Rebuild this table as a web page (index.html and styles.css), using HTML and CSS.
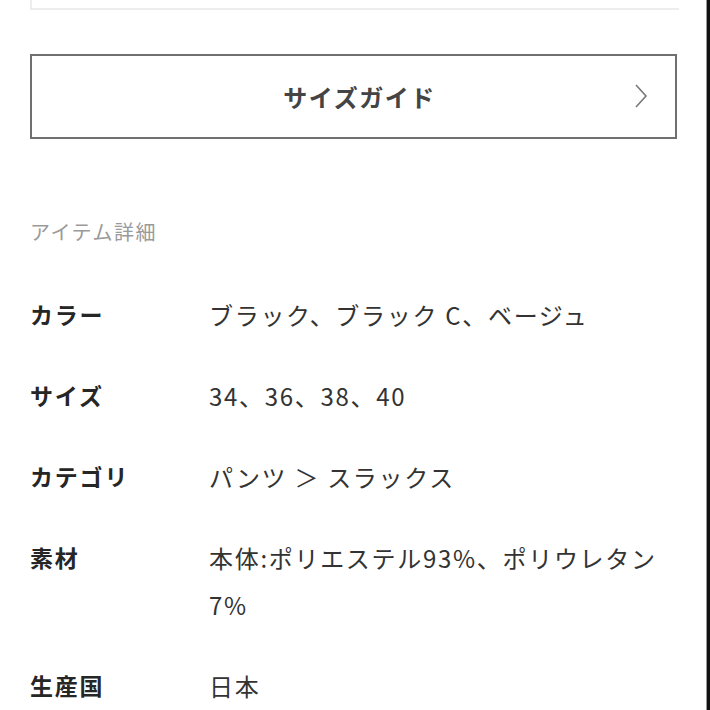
FILE: index.html
```html
<!DOCTYPE html>
<html lang="ja">
<head>
<meta charset="utf-8">
<link rel="stylesheet" href="styles.css">
</head>
<body>
<div class="page">
  <div class="top-box"></div>
  <a class="size-guide">
    <span class="size-guide-label">サイズガイド</span>
    <svg class="chevron" width="16" height="26" viewBox="0 0 16 26"><path d="M3 2 L13 13 L3 24" fill="none" stroke="#777" stroke-width="1.6"/></svg>
  </a>
  <h2 class="section-title">アイテム詳細</h2>
  <dl class="details">
    <dt>カラー</dt><dd>ブラック、ブラック C、ベージュ</dd>
    <dt>サイズ</dt><dd>34、36、38、40</dd>
    <dt>カテゴリ</dt><dd>パンツ ＞ スラックス</dd>
    <dt>素材</dt><dd>本体:ポリエステル93%、ポリウレタン7%</dd>
    <dt>生産国</dt><dd>日本</dd>
  </dl>
</div>
</body>
</html>
```
FILE: styles.css
```css
html, body {
  margin: 0;
  padding: 0;
  background: #fff;
}
.page {
  box-sizing: border-box;
  width: 710px;
  height: 710px;
  overflow: hidden;
  padding: 0 30px 0 30px;
  border-right: 3px solid #111;
  box-shadow: inset -1px 0 0 #999;
  font-family: "Noto Sans CJK JP", "Noto Sans", sans-serif;
  color: #333;
}
.top-box {
  height: 8px;
  margin-right: -2px;
  border-left: 2px solid #ededed;
  border-bottom: 2px solid #ededed;
}
.size-guide {
  box-sizing: border-box;
  margin-top: 44px;
  height: 85px;
  border: 2px solid #707070;
  display: flex;
  align-items: center;
  justify-content: center;
  position: relative;
}
.size-guide-label {
  font-size: 24px;
  font-weight: 700;
  color: #444;
  letter-spacing: 1.5px;
  margin-left: 12px;
}
.chevron {
  position: absolute;
  right: 26px;
  top: 27px;
}
.section-title {
  margin: 78px 0 0 0;
  font-size: 20px;
  line-height: 30px;
  font-weight: 400;
  color: #9a9a9a;
  letter-spacing: 1.5px;
}
.details {
  margin: 44px 0 0 0;
  display: grid;
  grid-template-columns: 179px 1fr;
  row-gap: 34px;
  font-size: 23px;
  line-height: 47px;
  letter-spacing: 1.8px;
}
.details dt {
  font-weight: 700;
  color: #262626;
}
.details dd {
  margin: 0;
  font-size: 24px;
  letter-spacing: 1.7px;
  color: #333;
}
```
